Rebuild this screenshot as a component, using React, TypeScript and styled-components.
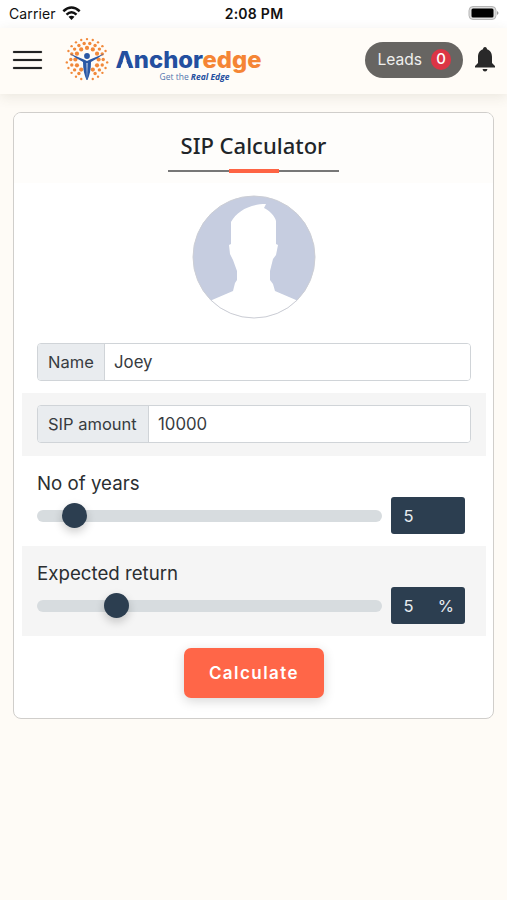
import React, { useState } from 'react';
import styled, { createGlobalStyle } from 'styled-components';

const GlobalStyle = createGlobalStyle`
  * { box-sizing: border-box; }
  body { margin: 0; background: #fefbf6; font-family: Inter, "Liberation Sans", sans-serif; color: #212529; }
`;

const Screen = styled.div`
  min-height: 900px;
  width: 507px;
  background: #fefbf6;
  overflow: hidden;
`;

const StatusBar = styled.div`
  height: 28px;
  padding: 0 8px 0 9px;
  background: #fff;
  display: grid;
  grid-template-columns: 1fr auto 1fr;
  align-items: center;
  font-size: 14px;
  color: #111;
`;

const Carrier = styled.div`
  display: flex;
  align-items: center;
  gap: 6px;
  letter-spacing: 0.12px;
  margin-top: -2px;
`;

const Clock = styled.div`
  font-weight: 600;
  font-size: 14px;
  letter-spacing: 0.25px;
  margin-top: -1px;
`;

const Battery = styled.svg`
  justify-self: end;
  display: block;
  margin-top: -2px;
`;

const Header = styled.header`
  height: 66px;
  padding: 0 11px 0 13px;
  display: flex;
  align-items: center;
  background: #fffcf7;
  box-shadow: 0 3px 12px rgba(80, 70, 50, 0.11);
`;

const MenuButton = styled.button`
  width: 29px;
  height: 18px;
  padding: 0;
  border: 0;
  background: none;
  display: flex;
  flex-direction: column;
  justify-content: space-between;
  margin-top: -2px;
`;

const MenuLine = styled.span`
  display: block;
  width: 29px;
  height: 2px;
  border-radius: 1px;
  background: #222;
  box-shadow: 0 0 1px #444;
`;

const Logo = styled.svg`
  display: block;
  margin-left: 21px;
`;

const LeadsPill = styled.div`
  margin-left: auto;
  margin-top: -2px;
  width: 98px;
  height: 36px;
  padding: 0 12px 2px 12.5px;
  display: flex;
  align-items: center;
  justify-content: space-between;
  border-radius: 18px;
  background: #676562;
  color: #efefed;
  font-size: 15.6px;
`;

const LeadsCount = styled.span`
  width: 20px;
  height: 21px;
  border-radius: 10px;
  background: #dc3545;
  color: #fff;
  font-size: 15px;
  font-weight: 500;
  line-height: 20px;
  text-align: center;
`;

const Bell = styled.svg`
  display: block;
  margin: -5px 0 0 11px;
`;

const Card = styled.main`
  width: 481px;
  height: 607px;
  margin: 18px 0 0 13px;
  padding: 0 7px 0 8px;
  border: 1px solid #d0cecb;
  border-radius: 8px;
  background: #fff;
`;

const TitleBlock = styled.div`
  height: 70px;
  margin: 0 -7px 0 -8px;
  padding-top: 16px;
  border-radius: 7px 7px 0 0;
  background: #fefdfb;
  display: flex;
  flex-direction: column;
  align-items: center;
`;

const Title = styled.h1`
  margin: 0;
  font: 500 22px/32px "Noto Sans", sans-serif;
  white-space: nowrap;
`;

const TitleRule = styled.div`
  width: 171px;
  height: 4px;
  margin: 8px 0 0;
  display: flex;
  align-items: center;
  justify-content: center;
  background: linear-gradient(#777, #777) center / 100% 2px no-repeat;
`;

const TitleAccent = styled.span`
  width: 50px;
  height: 4px;
  background: #fe6444;
`;

const AvatarWrap = styled.div`
  height: 149px;
  padding-top: 12px;
  display: flex;
  justify-content: center;
`;

const FieldRow = styled.div<{ $shaded?: boolean }>`
  height: ${p => (p.$shaded ? 63 : 61)}px;
  padding: ${p => (p.$shaded ? '12px' : '11px')} 15px 0;
  background: ${p => (p.$shaded ? '#f5f5f5' : '#fff')};
`;

const InputGroup = styled.label`
  width: 434px;
  height: 38px;
  display: flex;
  border: 1px solid #d0d4d8;
  border-radius: 4px;
  overflow: hidden;
  background: #fff;
  font-size: 16.5px;
  line-height: 36px;
`;

const Prefix = styled.span<{ $width: number }>`
  width: ${p => p.$width}px;
  flex: none;
  padding-left: 10px;
  white-space: nowrap;
  background: #e9ecef;
  border-right: 1px solid #d0d4d8;
  color: #373b40;
`;

const TextInput = styled.input`
  flex: 1;
  min-width: 0;
  border: 0;
  outline: 0;
  padding: 0 9px 1px;
  background: #fff;
  color: #373b40;
  font: 16.8px Inter, sans-serif;
`;

const SliderRow = styled.div<{ $shaded?: boolean }>`
  height: 90px;
  padding: 14px 21px 0 15px;
  background: ${p => (p.$shaded ? '#f5f5f5' : '#fff')};
`;

const SliderLabel = styled.div`
  height: 27px;
  font-size: 18.7px;
  line-height: 27px;
  color: #2b2e31;
`;

const SliderLine = styled.div`
  height: 37px;
  display: flex;
  align-items: center;
  justify-content: space-between;
`;

const Range = styled.input`
  appearance: none;
  width: 345px;
  height: 12px;
  margin: 0;
  border-radius: 6px;
  background: #d7dcdf;

  &::-webkit-slider-thumb {
    appearance: none;
    width: 25px;
    height: 25px;
    border-radius: 50%;
    background: #2c3e50;
    box-shadow: 0 4px 10px rgba(0, 0, 0, 0.2);
  }
`;

const ValueBox = styled.div`
  width: 74px;
  height: 37px;
  padding: 0 11px 0 12.5px;
  display: flex;
  align-items: center;
  justify-content: space-between;
  border-radius: 3px;
  background: #2c3e50;
  color: #e8edf1;
  font-size: 16.5px;
`;

const Actions = styled.div`
  padding-top: 12px;
  display: flex;
  justify-content: center;
`;

const CalculateButton = styled.button`
  width: 140px;
  height: 50px;
  border: 0;
  border-radius: 7px;
  background: #ff6648;
  color: #fff;
  box-shadow: 0 3px 12px rgba(0, 0, 0, 0.16);
  font: 600 17px Inter, sans-serif;
  letter-spacing: 1.45px;
`;

const dotRings = [
  { radius: 20.4, count: 22, size: 1.2, offset: 0 },
  { radius: 16.2, count: 18, size: 1.7, offset: 10 },
  { radius: 11.6, count: 12, size: 2.1, offset: 0 },
];

function BrandLogo() {
  return (
    <Logo width="206" height="54" viewBox="0 0 206 54" aria-label="Anchoredge">
      <g fill="#f1893b">
        {dotRings.flatMap(ring =>
          Array.from({ length: ring.count }, (_, i) => {
            const angle = ((i * 360) / ring.count + ring.offset - 90) * (Math.PI / 180);
            const x = 24 + ring.radius * Math.cos(angle);
            const y = 25.5 + ring.radius * Math.sin(angle);
            if (y > 29 && Math.abs(x - 24) < 5.5) return null;
            if (y < 25 && y > 20 && Math.abs(x - 24) > 5) return null;
            return <circle key={`${ring.radius}-${i}`} cx={x} cy={y} r={ring.size} />;
          }),
        )}
      </g>
      <g fill="#2b58a5">
        <circle cx="24" cy="22" r="2.900" />
        <path d="M6.500 19.500 Q15 23 21 25.500 L24 27 L27 25.500 Q33 23 41.500 19.500 Q34 25 28 28 Q28 38 24.500 46 H23.500 Q20 38 20 28 Q14 25 6.500 19.500Z" />
        <path d="M23.200 29 L24 46 L24.800 29" fill="#a9bbda" />
      </g>
      <text x="52.500" y="34" textLength="146" lengthAdjust="spacingAndGlyphs" fontFamily="Inter" fontWeight="800" fontSize="23.500">
        <tspan fill="#244f9f">Anchor</tspan>
        <tspan fill="#f58535">edge</tspan>
      </text>
      <path d="M57.300 34.500 L61.700 22.500 L66.100 34.500Z" fill="#fffcf7" />
      <text x="96.500" y="45.800" textLength="70" lengthAdjust="spacingAndGlyphs" fontFamily="Open Sans" fontSize="8.300" fill="#5275af">
        Get the <tspan fontWeight="700" fontStyle="italic" fill="#244f9f">Real Edge</tspan>
      </text>
    </Logo>
  );
}

function Avatar() {
  return (
    <svg width="124" height="124" viewBox="0 0 124 124" aria-label="Profile">
      <defs>
        <clipPath id="portrait"><circle cx="62" cy="62" r="61" /></clipPath>
      </defs>
      <g clipPath="url(#portrait)">
        <rect width="124" height="124" fill="#c6cde0" />
        <path fill="#fff" d="M0 124 L20 105 L41 96 L43 88 L45 85 V76 L41 65 L38 59 L37 50 L39 49 V27 C45 16 58 9 74 9 L72 13 C77 15 83 21 84 26 V49 L86 50 L84 60 L81 64 L78 76 V85 L81 89 L83 96 L104 105 L124 124Z" />
      </g>
      <circle cx="62" cy="62" r="61" fill="none" stroke="#ccced5" strokeWidth="1" />
    </svg>
  );
}

interface SliderFieldProps {
  label: string;
  initial: number;
  min: number;
  max: number;
  unit?: string;
  shaded?: boolean;
}

function SliderField({ label, initial, min, max, unit, shaded }: SliderFieldProps) {
  const [value, setValue] = useState(initial);
  return (
    <SliderRow $shaded={shaded}>
      <SliderLabel>{label}</SliderLabel>
      <SliderLine>
        <Range type="range" aria-label={label} min={min} max={max} step="any" value={value} onChange={e => setValue(Number(e.target.value))} />
        <ValueBox><span>{Math.round(value)}</span><span>{unit}</span></ValueBox>
      </SliderLine>
    </SliderRow>
  );
}

export default function App() {
  return (
    <>
      <GlobalStyle />
      <Screen>
        <StatusBar>
          <Carrier>
            Carrier
            <svg width="19" height="15" viewBox="0 0 19 15" fill="none" stroke="#111" strokeWidth="2.500">
              <path d="M1.300 5.200 Q9.500 -2.200 17.700 5.200M4.500 8.600 Q9.500 4 14.500 8.600" />
              <path d="M6.500 10.800 Q9.500 8.500 12.500 10.800 L9.500 14Z" fill="#111" stroke="none" />
            </svg>
          </Carrier>
          <Clock>2:08 PM</Clock>
          <Battery width="31" height="16" viewBox="0 0 31 16">
            <rect x="1" y="1.500" width="27" height="13" rx="4" fill="#ddd" stroke="#b5b5b5" />
            <rect x="3.500" y="3.500" width="22" height="9" rx="1.500" fill="#000" />
            <path d="M29 6 Q32 8 29 10Z" fill="#999" />
          </Battery>
        </StatusBar>
        <Header>
          <MenuButton aria-label="Menu"><MenuLine /><MenuLine /><MenuLine /></MenuButton>
          <BrandLogo />
          <LeadsPill>Leads<LeadsCount>0</LeadsCount></LeadsPill>
          <Bell width="22" height="26" viewBox="0 0 22 26" fill="#292929">
            <path d="M11 1 C12.300 1 13 2 13 3.300 C16.500 4.300 18 7.500 18 11 V17 L21 20 V21.500 H1 V20 L4 17 V11 C4 7.500 5.500 4.300 9 3.300 C9 2 9.700 1 11 1Z" />
            <path d="M8.500 23 H13.500 Q13 25.500 11 25.500 Q9 25.500 8.500 23Z" />
          </Bell>
        </Header>
        <Card>
          <TitleBlock>
            <Title>SIP Calculator</Title>
            <TitleRule><TitleAccent /></TitleRule>
          </TitleBlock>
          <AvatarWrap><Avatar /></AvatarWrap>
          <FieldRow>
            <InputGroup><Prefix $width={67}>Name</Prefix><TextInput defaultValue="Joey" aria-label="Name" /></InputGroup>
          </FieldRow>
          <FieldRow $shaded>
            <InputGroup><Prefix $width={111}>SIP amount</Prefix><TextInput defaultValue="10000" aria-label="SIP amount" /></InputGroup>
          </FieldRow>
          <SliderField label="No of years" initial={5} min={1} max={52} />
          <SliderField label="Expected return" initial={5} min={1} max={20} unit="%" shaded />
          <Actions><CalculateButton>Calculate</CalculateButton></Actions>
        </Card>
      </Screen>
    </>
  );
}
